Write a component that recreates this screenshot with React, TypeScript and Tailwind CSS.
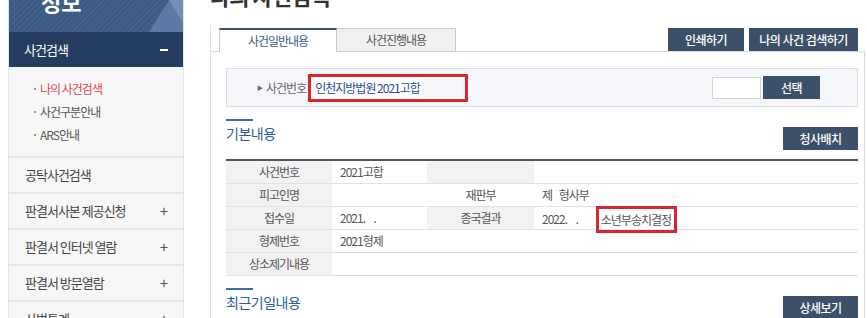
import React from "react";

const subMenu = [
  { label: "나의 사건검색", active: true },
  { label: "사건구분안내", active: false },
  { label: "ARS안내", active: false },
];

const sideMenu = [
  { label: "공탁사건검색", plus: false },
  { label: "판결서사본 제공신청", plus: true },
  { label: "판결서 인터넷 열람", plus: true },
  { label: "판결서 방문열람", plus: true },
  { label: "사법통계", plus: true },
];

function DarkButton({ label, className = "" }: { label: string; className?: string }) {
  return (
    <div
      className={
        "flex h-[23px] shrink-0 items-center justify-center bg-[#3d5069] text-[12px] font-medium text-white tracking-[-0.5px] " +
        className
      }
    >
      {label}
    </div>
  );
}

function SectionHead({ title, button }: { title: string; button: string }) {
  return (
    <div className="flex items-start justify-between">
      <div className="flex flex-col">
        <div className="h-[2px] w-[27px] bg-[#3b6cb3]" />
        <div className="mt-[2px] text-[14px] leading-[20px] text-[#2e5c9b] tracking-[-0.5px]">{title}</div>
      </div>
      <DarkButton label={button} className="mt-[8px] w-[75px]" />
    </div>
  );
}

function Label({ children, white = false }: { children?: React.ReactNode; white?: boolean }) {
  return (
    <div
      className={
        "flex h-[23px] items-center justify-center border-b border-[#e2e2e2] text-[#555] " +
        (white ? "bg-white" : "bg-[#f2f2f2]")
      }
    >
      {children}
    </div>
  );
}

function Value({ children, span = false }: { children?: React.ReactNode; span?: boolean }) {
  return (
    <div
      className={
        "flex h-[23px] items-center border-b border-[#e2e2e2] bg-white pl-[8px] text-[#555] " +
        (span ? "col-span-3" : "")
      }
    >
      {children}
    </div>
  );
}

export default function App() {
  return (
    <div className="flex h-[318px] w-[867px] overflow-hidden bg-white font-['Noto_Sans_CJK_KR',sans-serif]">
      {/* sidebar */}
      <aside className="ml-[8px] flex w-[176px] shrink-0 flex-col border-x border-[#e4e4e4] bg-[#f7f7f8]">
        <div className="relative h-[32px] shrink-0 overflow-hidden bg-[repeating-linear-gradient(135deg,#3c5a81_0px,#3c5a81_2px,#41618a_2px,#41618a_4px)]">
          <svg className="absolute inset-0" width="176" height="32" viewBox="0 0 176 32">
            <polygon points="140,32 160,0 176,0 176,32" fill="#5b7ba5" />
            <polygon points="160,0 176,26 176,0" fill="#7190b8" />
          </svg>
          <div className="relative -mt-[10px] ml-[32px] text-[22px] font-bold leading-[22px] text-white">정보</div>
        </div>
        <div className="flex h-[35px] shrink-0 items-center justify-between bg-[#233c60] pl-[15px] pr-[15px] text-[13px] text-white tracking-[-1px]">
          <span>사건검색</span>
          <span className="h-[2px] w-[8px] bg-white" />
        </div>
        <div className="flex h-[91px] shrink-0 flex-col justify-center gap-[7px] border-b-2 border-[#e6e7ea] pl-[25px] text-[12px] leading-[16px] tracking-[-1px]">
          {subMenu.map((m) => (
            <div key={m.label} className="flex items-center">
              <span className="mr-[4px] h-[2px] w-[2px] bg-[#999]" />
              <span className={m.active ? "text-[#e0474c]" : "text-[#555]"}>{m.label}</span>
            </div>
          ))}
        </div>
        {sideMenu.map((m) => (
          <div
            key={m.label}
            className="flex h-[36px] shrink-0 items-center justify-between border-b-2 border-[#e6e7ea] pl-[16px] pr-[16px] text-[13px] text-[#444] tracking-[-1px]"
          >
            <span>{m.label}</span>
            {m.plus && <span className="text-[15px] text-[#555]">+</span>}
          </div>
        ))}
      </aside>

      {/* main */}
      <main className="ml-[26px] flex w-[656px] shrink-0 flex-col">
        <div className="h-[25px] shrink-0 overflow-hidden">
          <div className="-mt-[16px] text-[22px] font-bold leading-[22px] text-[#333] tracking-[-1px]">나의 사건검색</div>
        </div>
        <div className="flex w-[655px] shrink-0 flex-col border-l border-[#e3e3e3] pt-[3px]">
          <div className="flex h-[24px] shrink-0 text-[12px] tracking-[-1px]">
            <div className="w-[8px] border-b border-[#dadada]" />
            <div className="flex w-[118px] items-center justify-center border-x border-t-2 border-[#c9c9c9] border-t-[#3a5478] bg-white text-[#3a5a8a]">
              사건일반내용
            </div>
            <div className="flex w-[119px] items-center justify-center border border-l-0 border-[#c9c9c9] bg-[#f1f1f1] text-[#555]">
              사건진행내용
            </div>
            <div className="flex flex-1 items-start justify-end gap-[5px] border-b border-[#dadada] pr-[7px]">
              <DarkButton label="인쇄하기" className="w-[76px]" />
              <DarkButton label="나의 사건 검색하기" className="w-[109px]" />
            </div>
          </div>

          <div className="flex h-[266px] shrink-0 flex-col border-r border-[#dadada] pl-[15px] pr-[6px] pt-[16px]">
            {/* search box */}
            <div className="flex h-[39px] shrink-0 items-center border border-[#dcdde3] bg-[#f5f6fa] pl-[30px] pr-[37px] text-[12px] tracking-[-1px]">
              <span className="mr-[4px] text-[6px] text-[#666]">▶</span>
              <span className="text-[#666]">사건번호</span>
              <div className="ml-[2px] flex h-[28px] w-[160px] shrink-0 items-center border-[3px] border-[#d7282f] pl-[3px]">
                <span className="bg-white px-[1px] text-[#2b4b9b]">인천지방법원 2021고합</span>
              </div>
              <div className="ml-auto h-[22px] w-[49px] border border-[#d5d5d5] bg-white" />
              <DarkButton label="선택" className="ml-[2px] h-[22px] w-[57px]" />
            </div>

            <div className="mt-[12px] shrink-0">
              <SectionHead title="기본내용" button="청사배치" />
            </div>

            {/* table */}
            <div className="mt-[9px] grid shrink-0 grid-cols-[106px_95px_107px_1fr] border-t-2 border-[#555] text-[12px] tracking-[-1px]">
              <Label>사건번호</Label>
              <Value>2021고합</Value>
              <Label />
              <Value />

              <Label>피고인명</Label>
              <Value />
              <Label white>재판부</Label>
              <Value>제&nbsp;&nbsp;&nbsp;&nbsp;형사부</Value>

              <Label>접수일</Label>
              <Value>2021.&nbsp;&nbsp;&nbsp;&nbsp;&nbsp;.</Value>
              <Label>종국결과</Label>
              <div className="flex h-[23px] items-start border-b border-[#e2e2e2] bg-white pl-[8px] text-[#555]">
                <span className="mt-[3px]">2022.&nbsp;&nbsp;&nbsp;&nbsp;&nbsp;.</span>
                <span className="relative z-10 ml-[18px] -mt-px flex h-[27px] items-center border-[3px] border-[#d7282f] pl-[2px] pr-[3px]">
                  소년부송치결정
                </span>
              </div>

              <Label>형제번호</Label>
              <Value span>2021형제</Value>

              <Label>상소제기내용</Label>
              <Value span />
            </div>

            <div className="mt-[12px] shrink-0">
              <SectionHead title="최근기일내용" button="상세보기" />
            </div>
          </div>
        </div>
      </main>
    </div>
  );
}
